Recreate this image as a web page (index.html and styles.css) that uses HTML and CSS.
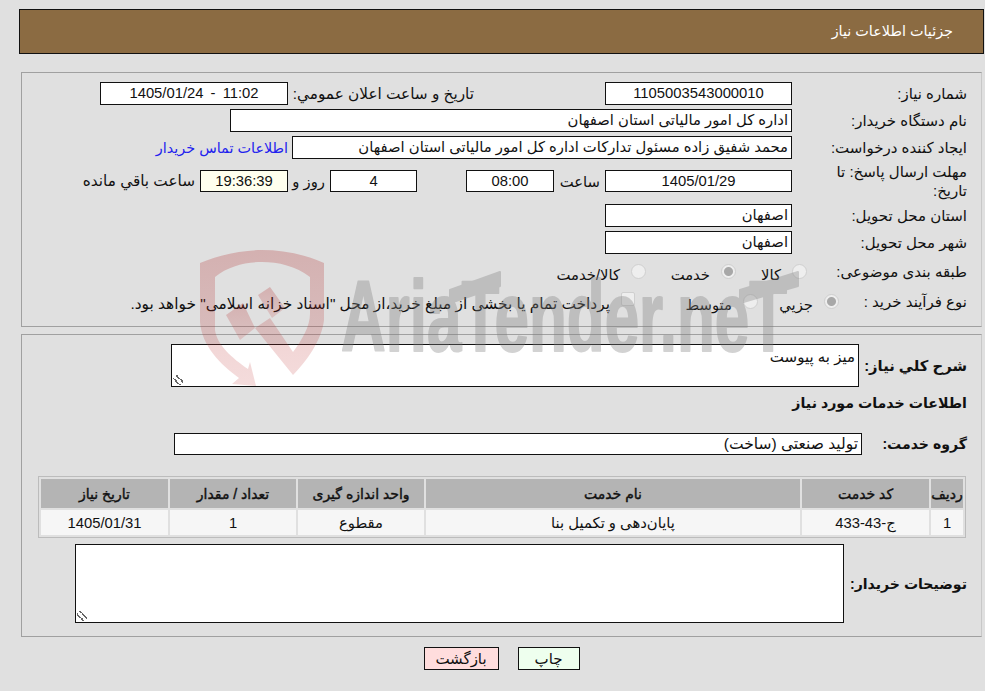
FILE: index.html
```html
<!DOCTYPE html>
<html lang="fa" dir="rtl">
<head>
  <meta charset="UTF-8" />
  <title>جزئیات اطلاعات نیاز</title>
  <link rel="stylesheet" href="styles.css">
</head>
<body>

  <div class="page-title">جزئیات اطلاعات نیاز</div>

  <!-- Need details -->
  <div class="panel panel-info">
    <div class="row">
      <label class="lbl">شماره نیاز:</label>
      <div class="field w-186 center">1105003543000010</div>
      <label class="lbl-mid">تاریخ و ساعت اعلان عمومي:</label>
      <div class="field w-188 center stamp" dir="ltr">1405/01/24 - 11:02</div>
    </div>
    <div class="row">
      <label class="lbl">نام دستگاه خریدار:</label>
      <div class="field w-562">اداره کل امور مالیاتی استان اصفهان</div>
    </div>
    <div class="row">
      <label class="lbl">ایجاد کننده درخواست:</label>
      <div class="field w-500">محمد شفیق زاده مسئول تدارکات اداره کل امور مالیاتی استان اصفهان</div>
      <a class="contact" href="#">اطلاعات تماس خریدار</a>
    </div>
    <div class="row row-deadline">
      <label class="lbl">مهلت ارسال پاسخ: تا تاریخ:</label>
      <div class="field w-186 center">1405/01/29</div>
      <span class="txt t-hour">ساعت</span>
      <div class="field w-88 center">08:00</div>
      <div class="field w-87 center days">4</div>
      <span class="txt t-days">روز و</span>
      <div class="field w-88 center timer">19:36:39</div>
      <span class="txt t-left">ساعت باقي مانده</span>
    </div>
    <div class="row">
      <label class="lbl">استان محل تحویل:</label>
      <div class="field w-186">اصفهان</div>
    </div>
    <div class="row">
      <label class="lbl">شهر محل تحویل:</label>
      <div class="field w-186">اصفهان</div>
    </div>
    <div class="row row-radio">
      <label class="lbl lbl-cat">طبقه بندی موضوعی:</label>
      <span class="radio"></span><span class="opt o-kala">کالا</span>
      <span class="radio on"></span><span class="opt o-khedmat">خدمت</span>
      <span class="radio"></span><span class="opt">کالا/خدمت</span>
    </div>
    <div class="row row-radio">
      <label class="lbl lbl-proc">نوع فرآیند خرید :</label>
      <span class="radio on"></span><span class="opt o-jozi">جزيي</span>
      <span class="radio"></span><span class="opt o-mid">متوسط</span>
      <span class="check"></span>
      <span class="opt o-note">پرداخت تمام یا بخشی از مبلغ خرید،از محل "اسناد خزانه اسلامی" خواهد بود.</span>
    </div>
  </div>

  <!-- Services -->
  <div class="panel panel-services">
    <div class="row-desc">
      <label class="lbl-bold">شرح کلي نیاز:</label>
      <div class="area area-desc">میز به پیوست<span class="grip"></span></div>
    </div>
    <h3 class="section">اطلاعات خدمات مورد نیاز</h3>
    <div class="row-group">
      <label class="lbl-bold">گروه خدمت:</label>
      <div class="field w-688">تولید صنعتی (ساخت)</div>
    </div>

    <table class="grid">
      <tr>
        <th class="c-row">ردیف</th>
        <th class="c-code">کد خدمت</th>
        <th class="c-name">نام خدمت</th>
        <th class="c-unit">واحد اندازه گیری</th>
        <th class="c-qty">تعداد / مقدار</th>
        <th class="c-date">تاریخ نیاز</th>
      </tr>
      <tr>
        <td>1</td>
        <td>ج-43-433</td>
        <td>پایان‌دهی و تکمیل بنا</td>
        <td>مقطوع</td>
        <td>1</td>
        <td>1405/01/31</td>
      </tr>
    </table>

    <div class="row-notes">
      <label class="lbl-bold">توضیحات خریدار:</label>
      <div class="area area-notes"><span class="grip"></span></div>
    </div>
  </div>

  <div class="actions">
    <button class="btn btn-print">چاپ</button>
    <button class="btn btn-back">بازگشت</button>
  </div>

  <!-- Watermark -->
  <svg class="watermark" width="985" height="691" viewBox="0 0 985 691">
    <defs>
      <linearGradient id="shieldFade" x1="0" y1="0" x2="0" y2="1">
        <stop offset="0" stop-color="#b02a2a" stop-opacity="0.26"/>
        <stop offset="1" stop-color="#c03030" stop-opacity="0.17"/>
      </linearGradient>
    </defs>
    <g fill="url(#shieldFade)">
      <path d="M200 263 C222 254 244 250 262 250 C282 250 304 254 324 263 L324 320 C322 340 306 362 293 375 L255 328 L270 318 L293 352 C302 340 310 326 310 314 L310 277 C296 266 278 262 262 262 C246 262 228 266 215 277 L215 330 C217 345 232 358 248 369 L250 362 L256 386 L232 384 L239 378 C220 364 202 346 200 322 Z"/>
      <path d="M270 287 L285 308 L272 318 L258 295 Z"/>
      <path d="M226 315 L243 303 L255 328 L240 340 Z"/>
    </g>
    <g class="wm-logo">
      <text class="wm-text" x="341" y="351" textLength="446" lengthAdjust="spacingAndGlyphs">AriaTender.neT</text>
      <polygon points="450,290 500,272 500,286 450,303"/>
      <polygon points="740,290 798,272 798,286 740,303"/>
    </g>
  </svg>

</body>
</html>
```

FILE: styles.css
```css
* {
  box-sizing: border-box;
}

body {
  position: relative;
  margin: 0;
  padding: 9px 1px 0 19px;
  min-height: 691px;
  overflow: hidden;
  background-color: #e0e0e0;
  font-family: "Liberation Sans", "DejaVu Sans", sans-serif;
  font-size: 14.8px;
  color: #111;
}

.page-title {
  height: 45px;
  padding-right: 30px;
  line-height: 43px;
  font-size: 14.4px;
  background-color: #8b6b42;
  border: 1px solid #111;
  color: #fff;
}

.panel {
  margin: 18px 2px 0 2px;
  border: 1px solid #a0a0a0;
  border-right-color: #c8c8c8;
}

.panel-info {
  height: 255px;
  padding: 9px 14px 0 0;
}

.panel-services {
  height: 303px;
  margin-top: 7px;
  padding: 9px 14px 0 0;
}

.row {
  display: flex;
  align-items: center;
  height: 23px;
  margin-bottom: 4px;
}

.lbl {
  width: 175px;
  flex: none;
  font-size: 15px;
}

.lbl-mid {
  flex: none;
  width: 181px;
  margin: 0 131px 0 5px;
  font-size: 15.3px;
  white-space: nowrap;
}

.field {
  flex: none;
  height: 23px;
  line-height: 20px;
  padding: 0 3px;
  background-color: #fff;
  border: 1px solid #111;
  white-space: nowrap;
  overflow: hidden;
}

.center {
  text-align: center;
}

.stamp {
  word-spacing: 3px;
}

.w-186 { width: 187px; }
.w-188 { width: 188px; }
.w-562 { width: 562px; }
.w-500 { width: 500px; }
.w-88 { width: 88px; }
.w-87 { width: 87px; }

.w-688 {
  width: 688px;
  font-size: 15.5px;
}

.contact {
  margin-right: 4px;
  color: #2222ee;
  font-size: 14.4px;
  text-decoration: none;
  white-space: nowrap;
}

.row-deadline {
  height: 36px;
  margin-bottom: 5px;
}

.row-deadline .lbl {
  padding-left: 35px;
  line-height: 19px;
}

.row-deadline .field {
  height: 22px;
}

.txt {
  flex: none;
  white-space: nowrap;
}

.t-hour {
  width: 41px;
  margin: 0 5px;
}

.days {
  margin-right: 49px;
}

.t-days {
  width: 28px;
  margin: 0 5px 0 9px;
}

.timer {
  background-color: #ffffee;
}

.t-left {
  margin-right: 5px;
  font-size: 15.3px;
}

.row-radio {
  height: 28px;
  margin-bottom: 2px;
}

.lbl-cat { width: 160px; }
.lbl-proc { width: 128px; }

.radio {
  flex: none;
  width: 15px;
  height: 15px;
  margin-top: -2px;
  border: 1px solid #cfcfcf;
  border-radius: 50%;
  background-color: #eeeeee;
}

.radio.on {
  background: radial-gradient(circle, #a8a8a8 0 4px, #eeeeee 5px);
}

.check {
  flex: none;
  width: 14px;
  height: 14px;
  margin: -6px 51px 0 0;
  border: 1px solid #cfcfcf;
  border-radius: 2px;
  background-color: #eeeeee;
}

.opt {
  margin-top: 4px;
  margin-right: 11px;
  white-space: nowrap;
}

.o-kala {
  width: 20px;
  margin-left: 25px;
}

.o-khedmat {
  width: 39px;
  margin-left: 25px;
}

.o-jozi {
  width: 35px;
  margin-left: 20px;
}

.o-mid {
  width: 46px;
}

.o-note {
  font-size: 15.4px;
}

.row-desc {
  display: flex;
  height: 43px;
}

.lbl-bold {
  flex: none;
  font-size: 14.1px;
  font-weight: bold;
  white-space: nowrap;
}

.row-desc .lbl-bold {
  width: 108px;
  font-size: 14.8px;
  line-height: 44px;
}

.area {
  position: relative;
  padding: 0 3px;
  background-color: #fff;
  border: 1px solid #111;
  font-size: 15px;
}

.area-desc {
  width: 688px;
  height: 43px;
  line-height: 24px;
}

.grip {
  position: absolute;
  left: 1px;
  bottom: 1px;
  width: 10px;
  height: 10px;
  background: linear-gradient(45deg, transparent 30%, #666 30% 40%, transparent 40% 60%, #666 60% 70%, transparent 70%);
}

.section {
  margin: 0;
  height: 46px;
  line-height: 33px;
  font-size: 14.2px;
  font-weight: bold;
}

.row-group {
  display: flex;
  align-items: center;
  height: 22px;
}

.row-group .lbl-bold {
  width: 105px;
}

.row-group .field {
  height: 22px;
}

.grid {
  width: 928px;
  height: 62px;
  margin: 21px 1px 0 0;
  table-layout: fixed;
  border: 1px solid #bcbcbc;
  border-collapse: separate;
  border-spacing: 2px;
  background-color: #e0e0e0;
}

.grid th,
.grid td {
  padding: 0;
  text-align: center;
  font-weight: normal;
}

.grid th {
  height: 29px;
  background-color: #b4b4b4;
  font-size: 14px;
  -webkit-text-stroke: 0.4px #111;
}

.grid td {
  height: 25px;
  background-color: #f6f6f6;
}

.c-row { width: 32px; }
.c-code { width: 127px; }
.c-name { width: 374px; }
.c-unit { width: 126px; }
.c-qty { width: 126px; }
.c-date { width: 127px; }

.row-notes {
  display: flex;
  align-items: center;
  margin-top: 6px;
}

.row-notes .lbl-bold {
  width: 123px;
}

.area-notes {
  width: 769px;
  height: 79px;
}

.actions {
  display: flex;
  justify-content: center;
  gap: 19px;
  margin-top: 10px;
}

.btn {
  height: 23px;
  padding: 0;
  border: 1px solid #111;
  font-family: inherit;
  font-size: 15px;
  color: #111;
}

.btn-print {
  width: 62px;
  background-color: #eeffee;
}

.btn-back {
  width: 75px;
  background-color: #ffdddd;
}

.watermark {
  position: absolute;
  left: 0;
  top: 0;
  direction: ltr;
  pointer-events: none;
}

.wm-logo {
  fill: #808080;
  stroke: #808080;
  stroke-width: 2px;
  stroke-linejoin: round;
  opacity: 0.35;
}

.wm-text {
  font-family: "Liberation Sans", sans-serif;
  font-size: 100px;
  font-weight: bold;
}
```
